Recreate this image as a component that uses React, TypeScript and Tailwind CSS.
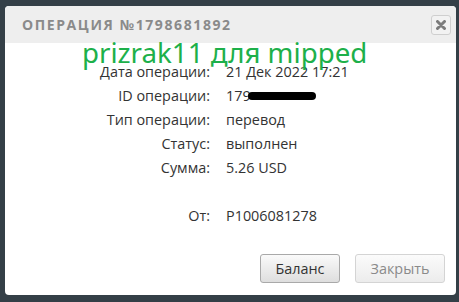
export default function App() {
  const rows: [string, React.ReactNode][] = [
    ["Дата операции:", "21 Дек 2022 17:21"],
    [
      "ID операции:",
      <span className="inline-flex items-center">
        179
        <span className="ml-[-3px] inline-block h-[8px] w-[68px] rounded-full bg-black" />
      </span>,
    ],
    ["Тип операции:", "перевод"],
    ["Статус:", "выполнен"],
    ["Сумма:", "5.26 USD"],
  ];

  return (
    <div
      className="h-[302px] w-[459px] bg-[#343f47] pl-[5px] pt-[6px]"
      style={{ fontFamily: "'Open Sans', 'Liberation Sans', sans-serif" }}
    >
      <div className="relative flex h-[289px] w-[451px] flex-col overflow-hidden rounded-[4px] bg-white">
        <div className="flex h-[37px] items-center justify-between bg-[#eeeeee] pl-[17px] pr-[5px]">
          <span className="text-[14px] font-bold tracking-[1.6px] text-[#8a8a8a]">
            ОПЕРАЦИЯ №1798681892
          </span>
          <button className="flex h-[20px] w-[20px] items-center justify-center rounded-[3px] border border-[#cfcfcf] bg-[#f2f2f2]">
            <svg width="10" height="10" viewBox="0 0 10 10">
              <path d="M1.5 1.5 L8.5 8.5 M8.5 1.5 L1.5 8.5" stroke="#7c7c7c" strokeWidth="3" strokeLinecap="round" />
            </svg>
          </button>
        </div>

        <div className="absolute left-[77px] top-[28px] text-[27.7px] leading-[36px] text-[#1db04a]" style={{ fontFamily: "'Noto Sans', sans-serif" }}>
          prizrak11 для mipped
        </div>

        <div className="grid grid-cols-[205px_1fr] gap-x-[16px] pt-[17px] text-[14.4px] leading-[24px] text-[#333]">
          {rows.map(([label, value]) => (
            <div key={label} className="contents">
              <span className="text-right">{label}</span>
              <span>{value}</span>
            </div>
          ))}
          <span className="h-[24px]" />
          <span />
          <span className="text-right">От:</span>
          <span>P1006081278</span>
        </div>

        <div className="mt-[26px] flex justify-end gap-[15px] pr-[11px]">
          <button className="h-[29px] w-[80px] rounded-[3px] border border-[#a9a9a9] bg-gradient-to-b from-[#fafafa] to-[#dedede] text-[14.4px] text-[#333]">
            Баланс
          </button>
          <button className="h-[29px] w-[90px] rounded-[3px] border border-[#d4d4d4] bg-gradient-to-b from-[#fbfbfb] to-[#ececec] text-[14.4px] text-[#8a8a8a]">
            Закрыть
          </button>
        </div>
      </div>
    </div>
  );
}
